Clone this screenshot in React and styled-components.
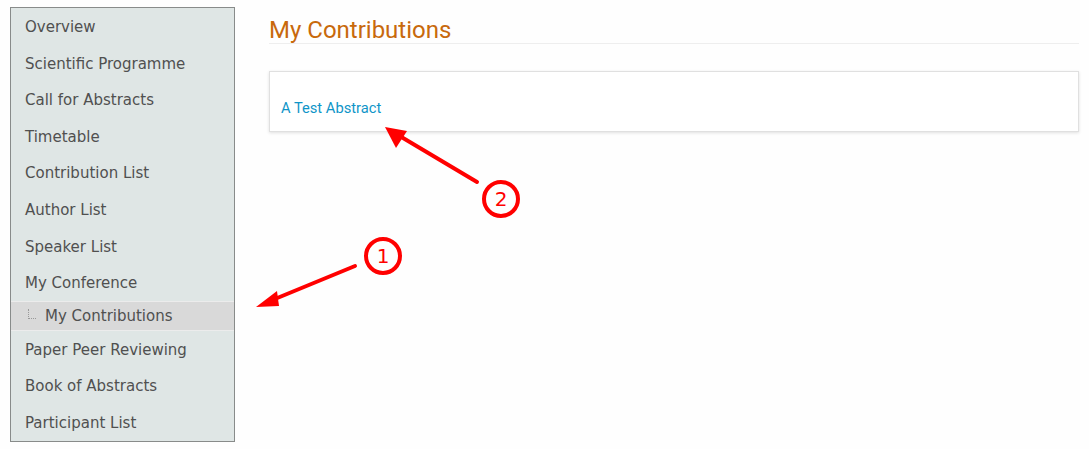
import React from 'react';
import styled, { createGlobalStyle } from 'styled-components';

const GlobalStyle = createGlobalStyle`
    html, body {
        margin: 0;
        padding: 0;
        background: #fefefe;
    }
    body {
        font-family: 'DejaVu Sans', Verdana, sans-serif;
    }
`;

// sidebar menu entries, in order
const menuItems = [
    { label: 'Overview' },
    { label: 'Scientific Programme' },
    { label: 'Call for Abstracts' },
    { label: 'Timetable' },
    { label: 'Contribution List' },
    { label: 'Author List' },
    { label: 'Speaker List' },
    { label: 'My Conference' },
    { label: 'My Contributions', sub: true },
    { label: 'Paper Peer Reviewing' },
    { label: 'Book of Abstracts' },
    { label: 'Participant List' },
];

export default function App() {
    return (
        <>
            <GlobalStyle />
            <Page>
                <Sidebar>
                    {menuItems.map((item) =>
                        item.sub ? (
                            <SubItem key={item.label}>
                                <TreeMark />
                                {item.label}
                            </SubItem>
                        ) : (
                            <MenuItem key={item.label}>{item.label}</MenuItem>
                        )
                    )}
                </Sidebar>
                <Main>
                    <Title>My Contributions</Title>
                    <Card>
                        <AbstractLink href="#">A Test Abstract</AbstractLink>
                    </Card>
                </Main>
                <Annotations />
            </Page>
        </>
    );
}

// red callouts drawn over the screenshot
function Annotations() {
    return (
        <Overlay width="1089" height="449" viewBox="0 0 1089 449">
            <g stroke="#f00" strokeWidth="4" strokeLinecap="round" fill="none">
                <line x1="355" y1="266" x2="270" y2="301" />
                <line x1="477" y1="182" x2="398" y2="135" />
                <circle cx="383" cy="256" r="17" strokeWidth="4" />
                <circle cx="501" cy="199" r="17" strokeWidth="4" />
            </g>
            <g fill="#f00">
                <polygon points="256,307 277,291 279,306" />
                <polygon points="385,127 396,148 407,131" />
            </g>
            <g
                fill="#f00"
                fontFamily="'DejaVu Sans', sans-serif"
                fontSize="20"
                textAnchor="middle"
            >
                <text x="383" y="263">1</text>
                <text x="501" y="206">2</text>
            </g>
        </Overlay>
    );
}

const Page = styled.div`
    position: relative;
    display: flex;
    align-items: flex-start;
    gap: 34px;
    padding: 7px 10px 0 10px;
    width: 1089px;
    height: 449px;
    box-sizing: border-box;
`;

const Sidebar = styled.nav`
    width: 225px;
    flex: none;
    border: 1px solid #888b8a;
    background: #dfe6e5;
    display: flex;
    flex-direction: column;
    box-sizing: border-box;
`;

const MenuItem = styled.a`
    display: block;
    height: 36.6px;
    line-height: 38px;
    padding-left: 14px;
    font-size: 15px;
    color: #505050;
    text-decoration: none;
    white-space: nowrap;
`;

const SubItem = styled.a`
    display: flex;
    align-items: center;
    height: 30px;
    padding-left: 17px;
    font-size: 15px;
    color: #505050;
    background: #d9d9d9;
    border-top: 1px solid #ececec;
    border-bottom: 1px solid #ececec;
    box-sizing: border-box;
    text-decoration: none;
    white-space: nowrap;
`;

const TreeMark = styled.span`
    width: 7px;
    height: 9px;
    margin-right: 9px;
    margin-top: -4px;
    border-left: 1px dotted #999;
    border-bottom: 1px dotted #999;
`;

const Main = styled.main`
    flex: 1;
    display: flex;
    flex-direction: column;
`;

const Title = styled.h1`
    margin: 11px 0 0 0;
    padding-bottom: 0;
    font-family: Roboto, 'Liberation Sans', sans-serif;
    font-weight: 400;
    font-size: 24px;
    line-height: 25px;
    color: #c8690c;
    border-bottom: 1px solid #eeeeee;
`;

const Card = styled.div`
    margin-top: 27px;
    height: 61px;
    padding: 26px 11px 0 11px;
    box-sizing: border-box;
    background: #fff;
    border: 1px solid #e0e0e0;
    box-shadow: 0 1px 3px rgba(0, 0, 0, 0.12);
`;

const AbstractLink = styled.a`
    font-family: Roboto, 'Liberation Sans', sans-serif;
    font-size: 14.7px;
    color: #0f95c8;
    text-decoration: none;
`;

const Overlay = styled.svg`
    position: absolute;
    left: 0;
    top: 0;
    pointer-events: none;
`;
